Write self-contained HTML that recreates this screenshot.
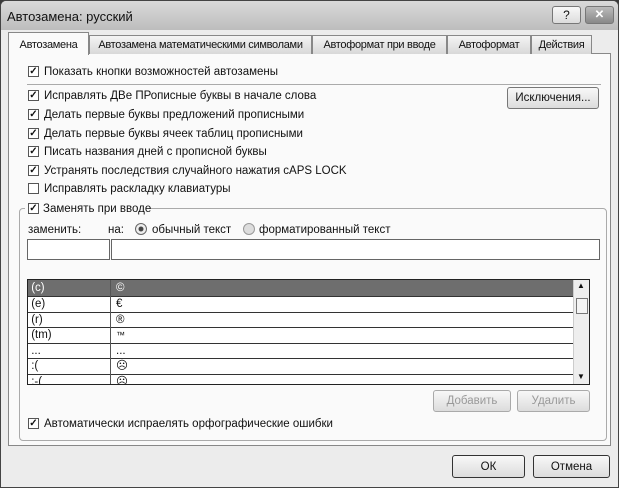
<!DOCTYPE html><html><head><meta charset="utf-8"><style>
*{box-sizing:border-box;margin:0;padding:0}
body{width:619px;height:488px;overflow:hidden;background:#3a3a3a;font-family:"Liberation Sans",sans-serif;font-size:11.5px;color:#111;position:relative}
.a{position:absolute}
.win{left:0;top:0;width:619px;height:488px;background:#ececec;border:1px solid #444;border-radius:6px 6px 0 0}
.title{left:1px;top:1px;width:617px;height:29px;background:linear-gradient(#dadada,#bdbdbd);border-radius:5px 5px 0 0}
.cb{width:11px;height:11px;border:1px solid #555;background:#fff;font-size:10px;line-height:9px;text-align:center;font-weight:bold}
.t{white-space:nowrap}
.tab{top:35px;height:19px;border:1px solid #888;border-bottom:none;background:linear-gradient(#f4f4f4,#d8d8d8);text-align:center;line-height:19px;white-space:nowrap;letter-spacing:-0.3px;font-size:11px}
.btn{border:1px solid #777;border-radius:3px;background:linear-gradient(#f8f8f8,#dcdcdc);text-align:center}
.row{left:0;width:545px;height:15.5px;border-bottom:1px solid #333;line-height:14px;white-space:nowrap}
</style></head><body>
<div class="a win"></div>
<div class="a title"></div>
<div class="a t" style="left:7px;top:9px;font-size:13px">Автозамена: русский</div>
<div class="a btn" style="left:552px;top:6px;width:29px;height:18px;line-height:16px;font-size:12px">?</div>
<div class="a btn" style="left:585px;top:6px;width:29px;height:18px;line-height:16px;font-weight:bold;background:linear-gradient(#bbb,#888);color:#fff">✕</div>
<div class="a" style="left:8px;top:53px;width:603px;height:393px;background:#fafafa;border:1px solid #888"></div>
<div class="a tab" style="left:8px;top:32px;width:81px;height:23px;background:#fafafa;line-height:24px">Автозамена</div>
<div class="a tab" style="left:89px;width:223px">Автозамена математическими символами</div>
<div class="a tab" style="left:312px;width:135px">Автоформат при вводе</div>
<div class="a tab" style="left:447px;width:84px">Автоформат</div>
<div class="a tab" style="left:531px;width:61px">Действия</div>

<div class="a cb" style="left:28px;top:66px">✓</div><div class="a t" style="left:44px;top:66px">Показать кнопки возможностей автозамены</div>
<div class="a" style="left:27px;top:84px;width:574px;height:1px;background:#aaa"></div>
<div class="a cb" style="left:28px;top:90px">✓</div><div class="a t" style="left:44px;top:90px">Исправлять ДВе ПРописные буквы в начале слова</div>
<div class="a cb" style="left:28px;top:109px">✓</div><div class="a t" style="left:44px;top:109px">Делать первые буквы предложений прописными</div>
<div class="a cb" style="left:28px;top:128px">✓</div><div class="a t" style="left:44px;top:128px">Делать первые буквы ячеек таблиц прописными</div>
<div class="a cb" style="left:28px;top:146px">✓</div><div class="a t" style="left:44px;top:146px">Писать названия дней с прописной буквы</div>
<div class="a cb" style="left:28px;top:165px">✓</div><div class="a t" style="left:44px;top:165px">Устранять последствия случайного нажатия cAPS LOCK</div>
<div class="a cb" style="left:28px;top:183px"></div><div class="a t" style="left:44px;top:183px">Исправлять раскладку клавиатуры</div>
<div class="a btn" style="left:507px;top:87px;width:92px;height:22px;line-height:21px">Исключения...</div>

<div class="a" style="left:19px;top:208px;width:588px;height:233px;border:1px solid #aaa;border-radius:4px"></div>
<div class="a" style="left:25px;top:201px;width:125px;height:14px;background:#fafafa"></div>
<div class="a cb" style="left:28px;top:203px">✓</div><div class="a t" style="left:43px;top:203px">Заменять при вводе</div>
<div class="a t" style="left:28px;top:224px">заменить:</div>
<div class="a t" style="left:108px;top:224px">на:</div>
<div class="a" style="left:135px;top:223px;width:12px;height:12px;border:1px solid #666;border-radius:50%;background:radial-gradient(#444 30%,#eee 40%)"></div>
<div class="a t" style="left:152px;top:224px">обычный текст</div>
<div class="a" style="left:243px;top:223px;width:12px;height:12px;border:1px solid #999;border-radius:50%;background:#ddd"></div>
<div class="a t" style="left:259px;top:224px">форматированный текст</div>
<div class="a" style="left:27px;top:239px;width:83px;height:21px;border:1px solid #666;background:#fff"></div>
<div class="a" style="left:111px;top:239px;width:489px;height:21px;border:1px solid #666;background:#fff"></div>

<div class="a" style="left:27px;top:279px;width:563px;height:106px;border:1px solid #222;background:#fff;overflow:hidden">
<div class="a row" style="top:0;height:17px;line-height:16px;background:#6e6e6e;color:#fff">&nbsp;(c)<span class="a" style="left:88px">©</span></div>
<div class="a row" style="top:17px">&nbsp;(e)<span class="a" style="left:88px">€</span></div>
<div class="a row" style="top:32.5px">&nbsp;(r)<span class="a" style="left:88px">®</span></div>
<div class="a row" style="top:48px">&nbsp;(tm)<span class="a" style="left:88px;font-size:9px">™</span></div>
<div class="a row" style="top:63.5px">&nbsp;...<span class="a" style="left:88px">...</span></div>
<div class="a row" style="top:79px">&nbsp;:(<span class="a" style="left:88px">☹</span></div>
<div class="a row" style="top:94.5px;border:none">&nbsp;:-(<span class="a" style="left:88px">☹</span></div>
<div class="a" style="left:82px;top:0;width:1px;height:106px;background:#555"></div>
<div class="a" style="left:545px;top:0;width:17px;height:106px;background:#eee;border-left:1px solid #ccc"></div>
<div class="a" style="left:548px;top:18px;width:12px;height:16px;border:1px solid #777;background:#f4f4f4"></div>
<div class="a" style="left:549px;top:1px;font-size:8px">▲</div>
<div class="a" style="left:549px;top:92px;font-size:8px">▼</div>
</div>
<div class="a btn" style="left:433px;top:390px;width:78px;height:22px;line-height:21px;color:#999;border-color:#aaa">Добавить</div>
<div class="a btn" style="left:517px;top:390px;width:73px;height:22px;line-height:21px;color:#999;border-color:#aaa">Удалить</div>
<div class="a cb" style="left:28px;top:418px">✓</div><div class="a t" style="left:44px;top:418px">Автоматически испраелять орфографические ошибки</div>

<div class="a btn" style="left:452px;top:455px;width:73px;height:23px;line-height:22px;border-color:#333">ОК</div>
<div class="a btn" style="left:533px;top:455px;width:77px;height:23px;line-height:22px;border-color:#333">Отмена</div>
</body></html>
